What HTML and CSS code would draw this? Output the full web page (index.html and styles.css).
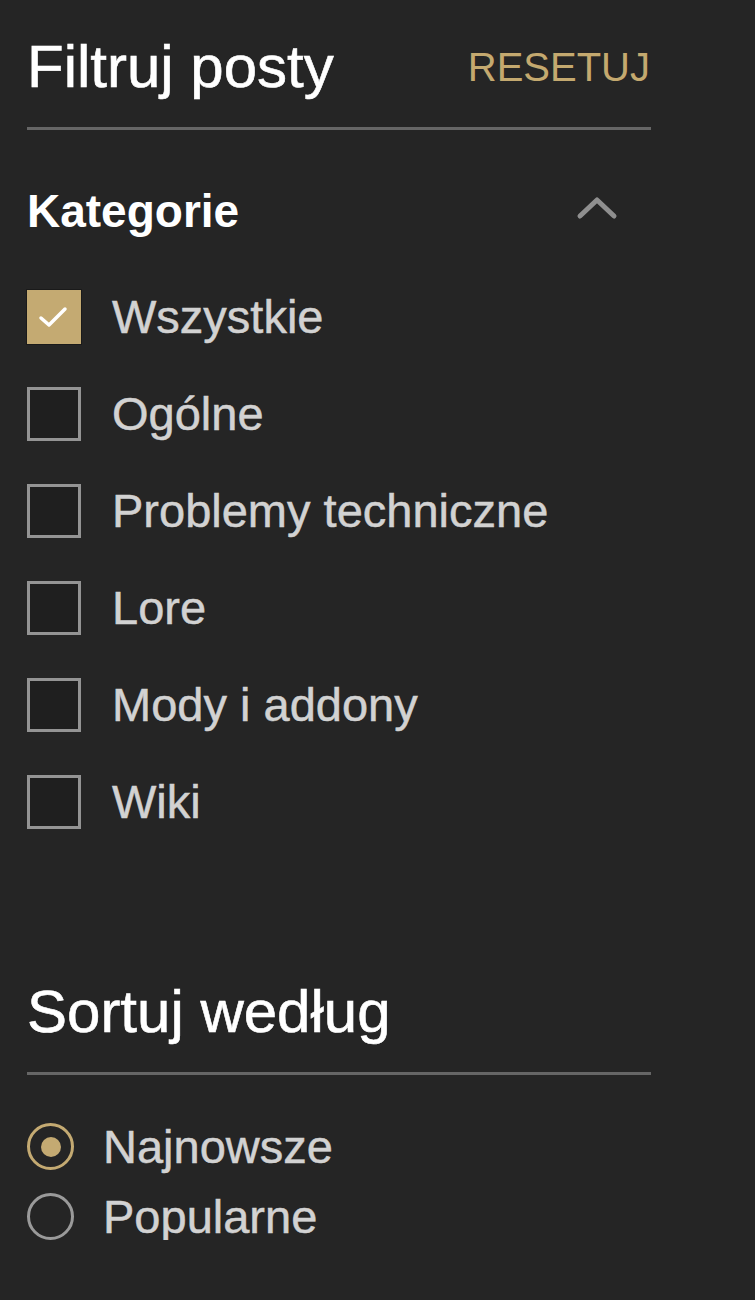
FILE: index.html
```html
<!DOCTYPE html>
<html lang="pl">

<head>
    <meta charset="UTF-8">
    <meta name="viewport" content="width=device-width, initial-scale=1.0">
    <title>Filtruj posty</title>
    <link rel="stylesheet" href="styles.css">
</head>

<body>
    <div class="sidebar">
        <div class="panel-head">
            <h2 class="panel-title">Filtruj posty</h2>
            <a href="#" class="reset-link">RESETUJ</a>
        </div>

        <div class="group-head">
            <h3 class="group-title">Kategorie</h3>
            <svg class="chevron" width="44" height="28" viewBox="0 0 44 28">
                <polyline points="5,23 22,7 39,23" fill="none" stroke="#8f8f8f" stroke-width="5" stroke-linecap="round" stroke-linejoin="round"/>
            </svg>
        </div>

        <ul class="check-list">
            <li class="check-item">
                <span class="checkbox checked">
                    <svg width="53" height="53" viewBox="0 0 53 53">
                        <polyline points="14,28 22,35 38,19" fill="none" stroke="#fff" stroke-width="3.5" stroke-linecap="round" stroke-linejoin="round"/>
                    </svg>
                </span>
                <span class="check-label">Wszystkie</span>
            </li>
            <li class="check-item">
                <span class="checkbox"></span>
                <span class="check-label">Ogólne</span>
            </li>
            <li class="check-item">
                <span class="checkbox"></span>
                <span class="check-label">Problemy techniczne</span>
            </li>
            <li class="check-item">
                <span class="checkbox"></span>
                <span class="check-label">Lore</span>
            </li>
            <li class="check-item">
                <span class="checkbox"></span>
                <span class="check-label">Mody i addony</span>
            </li>
            <li class="check-item">
                <span class="checkbox"></span>
                <span class="check-label">Wiki</span>
            </li>
        </ul>

        <div class="panel-head sort-head">
            <h2 class="panel-title">Sortuj według</h2>
        </div>

        <ul class="radio-list">
            <li class="radio-item">
                <span class="radio checked"></span>
                <span class="radio-label">Najnowsze</span>
            </li>
            <li class="radio-item">
                <span class="radio"></span>
                <span class="radio-label">Popularne</span>
            </li>
        </ul>
    </div>
</body>

</html>
```

FILE: styles.css
```css
body {
    margin: 0;
    background-color: #252525;
    font-family: "Liberation Sans", Arial, sans-serif;
}

.sidebar {
    width: 624px;
    padding: 33px 0 0 27px;
}

.panel-head {
    display: flex;
    justify-content: space-between;
    align-items: center;
    padding-bottom: 26px;
    border-bottom: 3px solid #666;
}

.panel-title {
    margin: 0;
    font-size: 60px;
    line-height: 68px;
    font-weight: normal;
    color: #fff;
    -webkit-text-stroke: 0.6px #fff;
}

.reset-link {
    font-size: 40px;
    line-height: 46px;
    color: #c4a96f;
    text-decoration: none;
    margin-right: 1px;
}

.group-head {
    display: flex;
    justify-content: space-between;
    align-items: center;
    margin-top: 55px;
    padding-right: 32px;
}

.group-title {
    margin: 0;
    font-size: 46px;
    line-height: 52px;
    font-weight: bold;
    color: #fff;
}

.chevron {
    margin-top: -8px;
}

.check-list,
.radio-list {
    list-style: none;
    margin: 0;
    padding: 0;
}

.check-list {
    margin-top: 53px;
    display: flex;
    flex-direction: column;
    gap: 43px;
}

.check-item {
    display: flex;
    align-items: center;
    height: 54px;
}

.checkbox {
    box-sizing: border-box;
    width: 54px;
    height: 54px;
    border: 3px solid #949494;
    background-color: #1f1f1f;
    flex-shrink: 0;
}

.checkbox.checked {
    border: none;
    background-color: #c4aa72;
    box-shadow: 0 0 0 1px #1a1a1a;
}

.checkbox svg {
    display: block;
}

.check-label {
    margin-left: 31px;
    font-size: 47px;
    line-height: 54px;
    color: #d2d2d2;
    -webkit-text-stroke: 0.5px #d2d2d2;
}

.sort-head {
    margin-top: 149px;
}

.radio-list {
    margin-top: 48px;
    display: flex;
    flex-direction: column;
    gap: 23px;
}

.radio-item {
    display: flex;
    align-items: center;
    height: 47px;
}

.radio {
    box-sizing: border-box;
    width: 47px;
    height: 47px;
    border: 3px solid #9a9a9a;
    border-radius: 50%;
    flex-shrink: 0;
    position: relative;
}

.radio.checked {
    border-color: #c4aa72;
}

.radio.checked::after {
    content: "";
    position: absolute;
    left: 10.5px;
    top: 10.5px;
    width: 20px;
    height: 20px;
    border-radius: 50%;
    background-color: #c4aa72;
}

.radio-label {
    margin-left: 29px;
    font-size: 47px;
    line-height: 54px;
    color: #d2d2d2;
    -webkit-text-stroke: 0.5px #d2d2d2;
}
```
